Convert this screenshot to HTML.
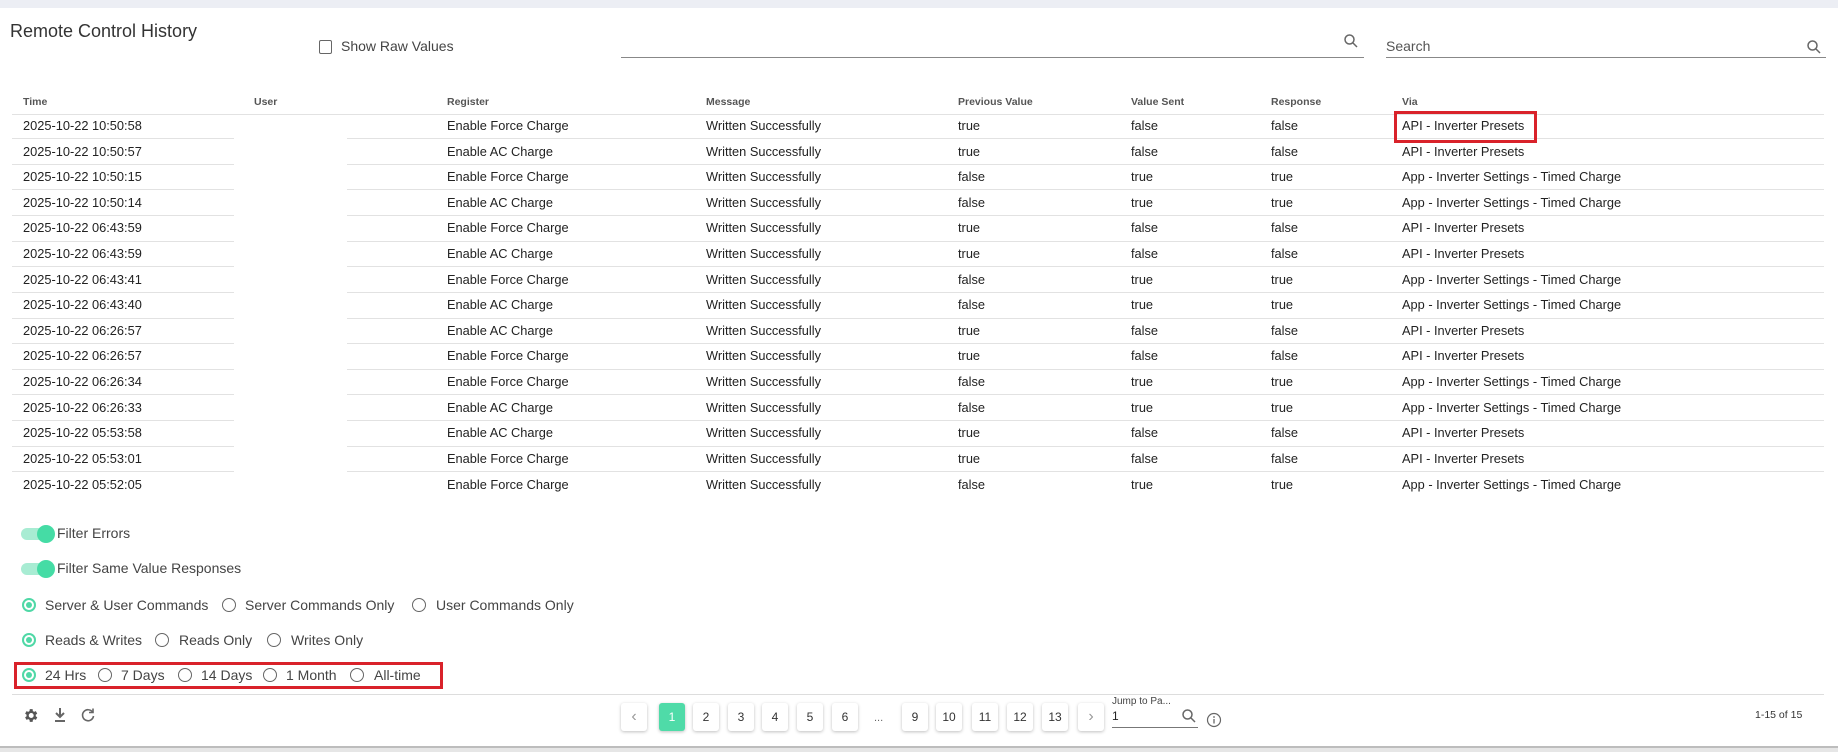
<!DOCTYPE html>
<html><head><meta charset="utf-8"><style>
*{box-sizing:border-box;margin:0;padding:0}
body{width:1838px;height:752px;background:#fff;font-family:"Liberation Sans",sans-serif;color:#222;position:relative;overflow:hidden}
.a{position:absolute;white-space:nowrap}
.top{left:0;top:0;width:1838px;height:8px;background:#eceef4}
.bot{left:0;top:746px;width:1838px;height:6px;background:#e6e6e6;border-top:2px solid #bdbdbd}
.th{font-size:10.5px;font-weight:bold;color:#555;top:96px}
.td{font-size:12.8px;color:#222}
.ln{height:1px;background:#e2e2e2}
.rb{border:3px solid #d9222a}
.radio{width:14px;height:14px;border:1.5px solid #666;border-radius:50%}
.radio.on{border:2px solid #4fd8a6}
.radio.on::after{content:"";position:absolute;left:2px;top:2px;width:6px;height:6px;border-radius:50%;background:#4fd8a6}
.lbl{font-size:14px;color:#444}
.pb{width:26px;height:28px;top:703px;border-radius:3px;box-shadow:0 1px 3px rgba(0,0,0,.25);background:#fff;font-size:12px;text-align:center;line-height:28px;color:#333}
.tg{width:32px;height:12px;border-radius:6px;background:#a8ecd3}
.tg::after{content:"";position:absolute;right:-2px;top:-3px;width:18px;height:18px;border-radius:50%;background:#45dca5}
</style></head><body>
<div class="a top"></div>
<div class="a" style="left:10px;top:21px;font-size:18px;color:#333">Remote Control History</div>
<div class="a" style="left:319px;top:40px;width:13px;height:14px;border:1.5px solid #666;border-radius:2px"></div>
<div class="a lbl" style="left:341px;top:38px">Show Raw Values</div>
<div class="a" style="left:621px;top:57px;width:743px;height:1px;background:#888"></div>
<svg class="a" style="left:1343px;top:33px" width="16" height="16" viewBox="0 0 16 16"><circle cx="6.5" cy="6.5" r="4.5" fill="none" stroke="#666" stroke-width="1.5"/><path d="M10 10l4 4" stroke="#666" stroke-width="1.5"/></svg>
<div class="a" style="left:1386px;top:57px;width:440px;height:1px;background:#888"></div>
<div class="a lbl" style="left:1386px;top:38px;color:#555">Search</div>
<svg class="a" style="left:1806px;top:39px" width="16" height="16" viewBox="0 0 16 16"><circle cx="6.5" cy="6.5" r="4.5" fill="none" stroke="#666" stroke-width="1.5"/><path d="M10 10l4 4" stroke="#666" stroke-width="1.5"/></svg>

<div class="a th" style="left:23px">Time</div>
<div class="a th" style="left:254px">User</div>
<div class="a th" style="left:447px">Register</div>
<div class="a th" style="left:706px">Message</div>
<div class="a th" style="left:958px">Previous Value</div>
<div class="a th" style="left:1131px">Value Sent</div>
<div class="a th" style="left:1271px">Response</div>
<div class="a th" style="left:1402px">Via</div>
<div class="a ln" style="left:12px;top:114px;width:1812px"></div>
<div id="rows"></div>
<div class="a rb" style="left:1394px;top:111px;width:143px;height:32px"></div>

<div class="a tg" style="left:21px;top:528px"></div>
<div class="a lbl" style="left:57px;top:525px">Filter Errors</div>
<div class="a tg" style="left:21px;top:563px"></div>
<div class="a lbl" style="left:57px;top:560px">Filter Same Value Responses</div>

<div class="a radio on" style="left:22px;top:598px"></div><div class="a lbl" style="left:45px;top:597px">Server &amp; User Commands</div>
<div class="a radio" style="left:222px;top:598px"></div><div class="a lbl" style="left:245px;top:597px">Server Commands Only</div>
<div class="a radio" style="left:412px;top:598px"></div><div class="a lbl" style="left:436px;top:597px">User Commands Only</div>

<div class="a radio on" style="left:22px;top:633px"></div><div class="a lbl" style="left:45px;top:632px">Reads &amp; Writes</div>
<div class="a radio" style="left:155px;top:633px"></div><div class="a lbl" style="left:179px;top:632px">Reads Only</div>
<div class="a radio" style="left:267px;top:633px"></div><div class="a lbl" style="left:291px;top:632px">Writes Only</div>

<div class="a rb" style="left:14px;top:662px;width:429px;height:27px"></div>
<div class="a radio on" style="left:22px;top:668px"></div><div class="a lbl" style="left:45px;top:667px">24 Hrs</div>
<div class="a radio" style="left:98px;top:668px"></div><div class="a lbl" style="left:121px;top:667px">7 Days</div>
<div class="a radio" style="left:178px;top:668px"></div><div class="a lbl" style="left:201px;top:667px">14 Days</div>
<div class="a radio" style="left:263px;top:668px"></div><div class="a lbl" style="left:286px;top:667px">1 Month</div>
<div class="a radio" style="left:350px;top:668px"></div><div class="a lbl" style="left:374px;top:667px">All-time</div>
<div class="a ln" style="left:12px;top:694px;width:1812px;background:#ddd"></div>

<svg class="a" style="left:22px;top:707px" width="17" height="17" viewBox="0 0 24 24"><path fill="#555" d="M19.4 13a7.5 7.5 0 000-2l2.1-1.6-2-3.5-2.5 1a7 7 0 00-1.7-1L15 3h-4l-.4 2.9a7 7 0 00-1.7 1l-2.5-1-2 3.5L6.5 11a7.5 7.5 0 000 2l-2.1 1.6 2 3.5 2.5-1a7 7 0 001.7 1L11 21h4l.4-2.9a7 7 0 001.7-1l2.5 1 2-3.5zM13 15.5a3.5 3.5 0 110-7 3.5 3.5 0 010 7z"/></svg>
<svg class="a" style="left:53px;top:707px" width="14" height="16" viewBox="0 0 14 16"><path d="M7 1v9M3 6l4 4 4-4" stroke="#666" stroke-width="2" fill="none"/><path d="M2 14h10" stroke="#666" stroke-width="2"/></svg>
<svg class="a" style="left:80px;top:707px" width="16" height="16" viewBox="0 0 16 16"><path d="M12.5 5A5.5 5.5 0 1013.5 9" stroke="#666" stroke-width="1.6" fill="none"/><path d="M13 1.5v4h-4" stroke="#666" stroke-width="1.6" fill="none"/></svg>

<div id="pg"></div>
<div class="a" style="left:1112px;top:696px;font-size:10px;color:#444">Jump to Pa...</div>
<div class="a" style="left:1112px;top:709px;font-size:12px;color:#222">1</div>
<div class="a" style="left:1112px;top:727px;width:86px;height:1px;background:#777"></div>
<svg class="a" style="left:1181px;top:708px" width="16" height="16" viewBox="0 0 16 16"><circle cx="6.5" cy="6.5" r="4.5" fill="none" stroke="#666" stroke-width="1.5"/><path d="M10 10l4 4" stroke="#666" stroke-width="1.5"/></svg>
<svg class="a" style="left:1206px;top:712px" width="16" height="16" viewBox="0 0 16 16"><circle cx="8" cy="8" r="6.5" fill="none" stroke="#666" stroke-width="1.2"/><circle cx="8" cy="5" r="0.9" fill="#666"/><path d="M8 7v4.5" stroke="#666" stroke-width="1.3"/></svg>
<div class="a" style="left:1755px;top:709px;font-size:10.5px;color:#333">1-15 of 15</div>
<div class="a bot"></div>

<script>
var d=[
["2025-10-22 10:50:58","Enable Force Charge","true","false","false","API - Inverter Presets"],
["2025-10-22 10:50:57","Enable AC Charge","true","false","false","API - Inverter Presets"],
["2025-10-22 10:50:15","Enable Force Charge","false","true","true","App - Inverter Settings - Timed Charge"],
["2025-10-22 10:50:14","Enable AC Charge","false","true","true","App - Inverter Settings - Timed Charge"],
["2025-10-22 06:43:59","Enable Force Charge","true","false","false","API - Inverter Presets"],
["2025-10-22 06:43:59","Enable AC Charge","true","false","false","API - Inverter Presets"],
["2025-10-22 06:43:41","Enable Force Charge","false","true","true","App - Inverter Settings - Timed Charge"],
["2025-10-22 06:43:40","Enable AC Charge","false","true","true","App - Inverter Settings - Timed Charge"],
["2025-10-22 06:26:57","Enable AC Charge","true","false","false","API - Inverter Presets"],
["2025-10-22 06:26:57","Enable Force Charge","true","false","false","API - Inverter Presets"],
["2025-10-22 06:26:34","Enable Force Charge","false","true","true","App - Inverter Settings - Timed Charge"],
["2025-10-22 06:26:33","Enable AC Charge","false","true","true","App - Inverter Settings - Timed Charge"],
["2025-10-22 05:53:58","Enable AC Charge","true","false","false","API - Inverter Presets"],
["2025-10-22 05:53:01","Enable Force Charge","true","false","false","API - Inverter Presets"],
["2025-10-22 05:52:05","Enable Force Charge","false","true","true","App - Inverter Settings - Timed Charge"]];
var h="",xs=[23,447,958,1131,1271,1402];
d.forEach(function(r,i){var y=125.4+i*25.62;
r.forEach(function(t,j){h+='<div class="a td" style="left:'+xs[j]+'px;top:'+(y-7.5)+'px">'+t+'</div>';});
h+='<div class="a td" style="left:706px;top:'+(y-7.5)+'px">Written Successfully</div>';
if(i<14){var ly=y+12.8;h+='<div class="a ln" style="left:12px;top:'+ly+'px;width:222px"></div><div class="a ln" style="left:347px;top:'+ly+'px;width:1477px"></div>';}
});
document.getElementById('rows').innerHTML=h;
var p=["‹","1","2","3","4","5","6","...","9","10","11","12","13","›"],px=[634,672,706,741,775,810,845,879,915,949,985,1020,1055,1091],g="";
p.forEach(function(t,i){if(t==="..."){g+='<div class="a" style="left:'+(px[i]-5)+'px;top:712px;font-size:11px;color:#666">...</div>';return;}
var on=t==="1";g+='<div class="a pb" style="left:'+(px[i]-13)+'px;'+(on?'background:#4fdba8;color:#fff;':'')+(t.length==1&&!/\d/.test(t)?'color:#999;font-size:16px;':'')+'">'+t+'</div>';});
document.getElementById('pg').innerHTML=g;
</script>
</body></html>
